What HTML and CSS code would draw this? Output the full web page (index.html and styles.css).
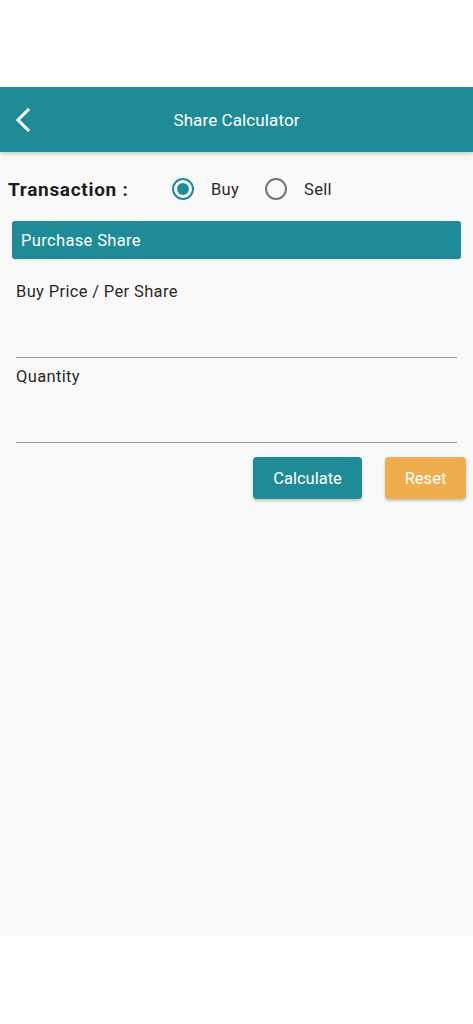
FILE: index.html
```html
<!DOCTYPE html>
<html lang="en">
<head>
<meta charset="utf-8">
<title>Share Calculator</title>
<link rel="stylesheet" href="styles.css">
</head>
<body>
<div class="statusbar"></div>
<header class="appbar">
  <div class="back">
    <svg width="16" height="24" viewBox="0 0 16 24"><path d="M13 2 L3 12 L13 22" fill="none" stroke="#fff" stroke-width="3" stroke-linecap="square" stroke-linejoin="miter"/></svg>
  </div>
  <div class="title">Share Calculator</div>
  <div></div>
</header>
<main class="content">
  <div class="txn-row">
    <span class="txn-label">Transaction :</span>
    <label class="radio checked"><span class="dot"></span><span class="radio-text">Buy</span></label>
    <label class="radio"><span class="dot"></span><span class="radio-text">Sell</span></label>
  </div>
  <div class="section-bar">Purchase Share</div>
  <div class="field field-first">
    <div class="field-label">Buy Price / Per Share</div>
  </div>
  <div class="field">
    <div class="field-label">Quantity</div>
  </div>
  <div class="actions">
    <button class="btn btn-calc">Calculate</button>
    <button class="btn btn-reset">Reset</button>
  </div>
</main>
<div class="bottom"></div>
</body>
</html>
```
FILE: styles.css
```css
* { box-sizing: border-box; }
html, body { margin: 0; padding: 0; background: #ffffff; }
body { font-family: Roboto, "Noto Sans", sans-serif; color: #222; width: 473px; }

.statusbar { height: 87px; background: #ffffff; }

.appbar {
  height: 65px;
  background: #1f8b97;
  display: grid;
  grid-template-columns: 1fr auto 1fr;
  align-items: center;
  box-shadow: 0 2px 4px rgba(0,0,0,0.18);
  position: relative;
  z-index: 1;
}
.back { padding-left: 15px; display: flex; align-items: center; }
.back svg { display: block; }
.title { color: #fff; font-size: 17px; letter-spacing: 0.1px; }

.content {
  height: 784px;
  background: #f9f9f9;
  padding-top: 23px;
}

.txn-row {
  display: flex;
  align-items: center;
  height: 28px;
  padding-left: 8px;
}
.txn-label { font-weight: 700; font-size: 19px; color: #1c1c1c; width: 164px; letter-spacing: 0.7px; }
.radio { display: flex; align-items: center; margin-right: 26px; }
.dot {
  width: 22px; height: 22px; border-radius: 50%;
  border: 2px solid #767676;
  display: flex; align-items: center; justify-content: center;
}
.radio.checked .dot { border-color: #1f8b97; }
.radio.checked .dot::after {
  content: ""; width: 12px; height: 12px; border-radius: 50%; background: #1f8b97;
}
.radio-text { font-size: 16.5px; color: #2a2a2a; margin-left: 17px; letter-spacing: 0.3px; }

.section-bar {
  margin: 18px 12px 0 12px;
  height: 38px;
  background: #1f8b97;
  border-radius: 3px;
  color: #fff;
  font-size: 16.5px;
  letter-spacing: 0.35px;
  display: flex; align-items: center;
  padding-left: 9px;
  box-shadow: 0 1px 2px rgba(0,0,0,0.12);
}

.field {
  margin: 0 16px 0 16px;
  border-bottom: 1.5px solid #9a9a9a;
  height: 85px;
  padding-top: 9px;
}
.field-first { height: 99px; padding-top: 23px; }
.field-label { font-size: 16.5px; color: #2a2a2a; letter-spacing: 0.35px; }

.actions {
  display: flex;
  justify-content: flex-end;
  gap: 23px;
  padding-right: 7px;
  margin-top: 14px;
}
.btn {
  border: none;
  height: 42px;
  border-radius: 4px;
  color: #fff;
  font-family: Roboto, "Noto Sans", sans-serif;
  font-size: 16.5px;
  box-shadow: 0 2px 3px rgba(0,0,0,0.22);
  padding: 0;
}
.btn-calc { background: #1f8b97; width: 109px; }
.btn-reset { background: #f0ad4e; width: 81px; }

.bottom { height: 88px; background: #fff; }
```
